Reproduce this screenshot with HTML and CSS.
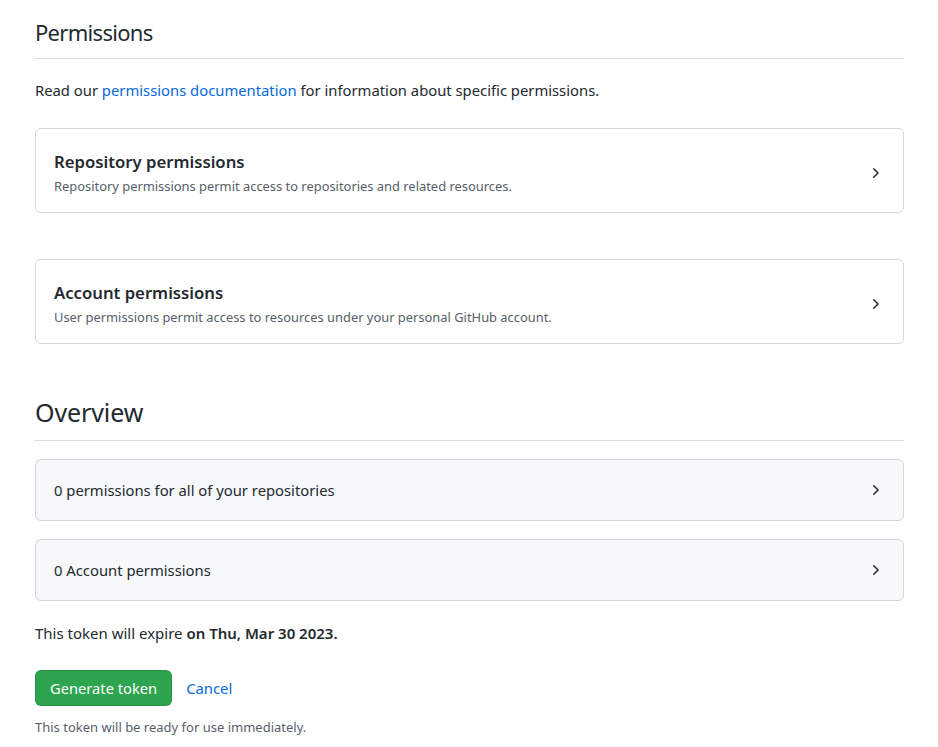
FILE: index.html
```html
<!DOCTYPE html>
<html>
<head>
<meta charset="utf-8">
<link rel="stylesheet" href="styles.css">
</head>
<body>
<main class="page">
  <section class="section">
    <h2 class="section-title">Permissions</h2>
    <p class="intro">Read our <a class="link" href="#">permissions documentation</a> for information about specific permissions.</p>
    <div class="perm-list">
      <div class="perm-card">
        <div class="perm-text">
          <div class="perm-title">Repository permissions</div>
          <div class="perm-desc">Repository permissions permit access to repositories and related resources.</div>
        </div>
        <svg class="chevron" width="16" height="16" viewBox="0 0 16 16"><path d="M6.22 3.22a.75.75 0 0 1 1.06 0l4.25 4.25a.75.75 0 0 1 0 1.06l-4.25 4.25a.751.751 0 0 1-1.042-.018.751.751 0 0 1-.018-1.042L9.94 8 6.22 4.28a.75.75 0 0 1 0-1.06Z"/></svg>
      </div>
      <div class="perm-card">
        <div class="perm-text">
          <div class="perm-title">Account permissions</div>
          <div class="perm-desc">User permissions permit access to resources under your personal GitHub account.</div>
        </div>
        <svg class="chevron" width="16" height="16" viewBox="0 0 16 16"><path d="M6.22 3.22a.75.75 0 0 1 1.06 0l4.25 4.25a.75.75 0 0 1 0 1.06l-4.25 4.25a.751.751 0 0 1-1.042-.018.751.751 0 0 1-.018-1.042L9.94 8 6.22 4.28a.75.75 0 0 1 0-1.06Z"/></svg>
      </div>
    </div>
  </section>
  <section class="section overview">
    <h2 class="section-title big">Overview</h2>
    <div class="summary-list">
      <div class="summary-card">
        <span>0 permissions for all of your repositories</span>
        <svg class="chevron" width="16" height="16" viewBox="0 0 16 16"><path d="M6.22 3.22a.75.75 0 0 1 1.06 0l4.25 4.25a.75.75 0 0 1 0 1.06l-4.25 4.25a.751.751 0 0 1-1.042-.018.751.751 0 0 1-.018-1.042L9.94 8 6.22 4.28a.75.75 0 0 1 0-1.06Z"/></svg>
      </div>
      <div class="summary-card">
        <span>0 Account permissions</span>
        <svg class="chevron" width="16" height="16" viewBox="0 0 16 16"><path d="M6.22 3.22a.75.75 0 0 1 1.06 0l4.25 4.25a.75.75 0 0 1 0 1.06l-4.25 4.25a.751.751 0 0 1-1.042-.018.751.751 0 0 1-.018-1.042L9.94 8 6.22 4.28a.75.75 0 0 1 0-1.06Z"/></svg>
      </div>
    </div>
    <p class="expire">This token will expire <strong>on Thu, Mar 30 2023.</strong></p>
    <div class="actions">
      <button class="btn-primary" type="button">Generate token</button>
      <a class="link" href="#">Cancel</a>
    </div>
    <p class="note">This token will be ready for use immediately.</p>
  </section>
</main>
</body>
</html>
```
FILE: styles.css
```css
* { box-sizing: border-box; }
html, body { margin: 0; background: #fff; }
body {
  font-family: "Noto Sans", "Liberation Sans", sans-serif;
  font-size: 14.8px;
  line-height: 21px;
  color: #24292f;
}
.page { padding: 14px 34px 0 35px; }
.section-title {
  margin: 0;
  padding-bottom: 8px;
  font-size: 22px;
  letter-spacing: -0.7px;
  font-weight: 400;
  line-height: 36px;
  border-bottom: 1px solid #d8dee4;
}
.section-title.big { font-size: 25px; letter-spacing: -0.1px; line-height: 39px; }
.intro { margin: 21px 0 27px; }
.link { color: #0969da; text-decoration: none; }
.perm-list { display: flex; flex-direction: column; gap: 46px; }
.perm-card {
  display: flex;
  align-items: flex-start;
  justify-content: space-between;
  padding: 21px 18px 17px;
  border: 1px solid #d0d7de;
  border-radius: 6px;
}
.perm-title { font-size: 16.7px; font-weight: 600; line-height: 24px; }
.perm-desc { margin-top: 3px; font-size: 12.9px; color: #57606a; line-height: 18px; }
.perm-card .chevron { align-self: center; }
.chevron { fill: #24292f; flex: none; margin-right: 2px; }
.overview { margin-top: 49px; }
.summary-list { display: flex; flex-direction: column; gap: 18px; margin-top: 18px; }
.summary-card {
  display: flex;
  align-items: center;
  justify-content: space-between;
  height: 62px;
  padding: 0 18px;
  background: #f6f8fa;
  border: 1px solid #d0d7de;
  border-radius: 6px;
}
.expire { margin: 22px 0 26px; font-size: 15px; }
.expire strong { font-weight: 600; }
.actions { display: flex; align-items: center; gap: 14px; }
.btn-primary {
  font-family: inherit;
  font-size: 14.7px;
  height: 36px;
  padding: 0 14px;
  color: #fff;
  background: #2da44e;
  border: 1px solid rgba(27,31,36,0.15);
  border-radius: 6px;
}
.note { margin: 12px 0 0; font-size: 13px; line-height: 18px; color: #57606a; }
```
